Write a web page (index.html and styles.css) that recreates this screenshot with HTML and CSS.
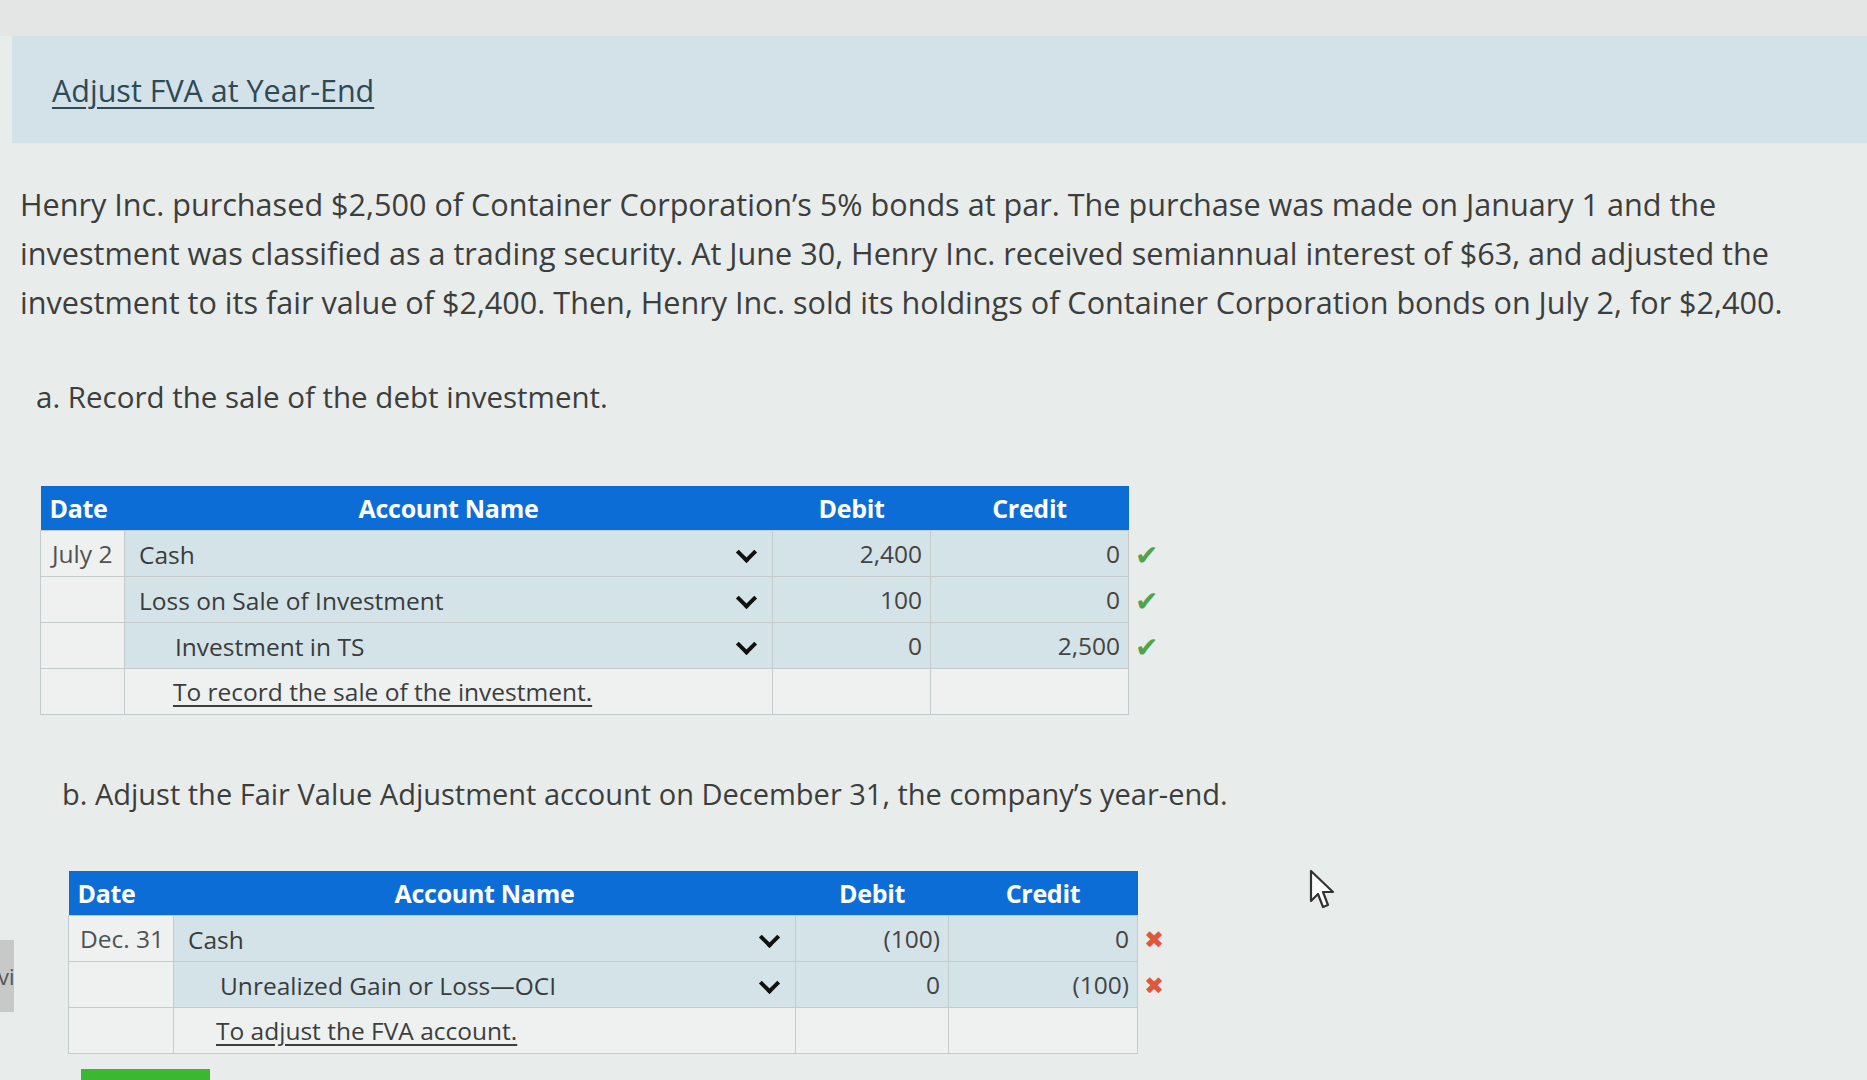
FILE: index.html
```html
<!DOCTYPE html>
<html lang="en">

<head>
    <meta charset="UTF-8">
    <meta name="viewport" content="width=device-width, initial-scale=1.0">
    <title>Adjust FVA at Year-End</title>
    <link rel="stylesheet" href="styles.css">
</head>

<body>
    <div class="top-strip"></div>

    <div class="title-band">
        <a href="#" class="title-link">Adjust FVA at Year-End</a>
    </div>

    <div class="side-tab">vi</div>

    <main class="content">
        <p class="prompt">
            Henry Inc. purchased $2,500 of Container Corporation’s 5% bonds at par. The purchase was made on January 1 and the<br>
            investment was classified as a trading security. At June 30, Henry Inc. received semiannual interest of $63, and adjusted the<br>
            investment to its fair value of $2,400. Then, Henry Inc. sold its holdings of Container Corporation bonds on July 2, for $2,400.
        </p>

        <p class="part part-a">a. Record the sale of the debt investment.</p>

        <!-- Asiento a -->
        <table class="journal journal-a">
            <colgroup>
                <col class="c-date">
                <col class="c-account">
                <col class="c-debit">
                <col class="c-credit">
                <col class="c-mark">
            </colgroup>
            <thead>
                <tr>
                    <th class="th-date">Date</th>
                    <th>Account Name</th>
                    <th>Debit</th>
                    <th>Credit</th>
                    <th class="mark"></th>
                </tr>
            </thead>
            <tbody>
                <tr>
                    <td class="date">July 2</td>
                    <td class="account"><span>Cash</span><i class="chev"></i></td>
                    <td class="num">2,400</td>
                    <td class="num">0</td>
                    <td class="mark"><span class="ok">✔</span></td>
                </tr>
                <tr>
                    <td class="date"></td>
                    <td class="account"><span>Loss on Sale of Investment</span><i class="chev"></i></td>
                    <td class="num">100</td>
                    <td class="num">0</td>
                    <td class="mark"><span class="ok">✔</span></td>
                </tr>
                <tr>
                    <td class="date"></td>
                    <td class="account credit-line"><span>Investment in TS</span><i class="chev"></i></td>
                    <td class="num">0</td>
                    <td class="num">2,500</td>
                    <td class="mark"><span class="ok">✔</span></td>
                </tr>
                <tr class="memo-row">
                    <td class="date"></td>
                    <td class="memo"><a href="#">To record the sale of the investment.</a></td>
                    <td></td>
                    <td></td>
                    <td class="mark"></td>
                </tr>
            </tbody>
        </table>

        <p class="part part-b">b. Adjust the Fair Value Adjustment account on December 31, the company’s year-end.</p>

        <!-- Asiento b -->
        <table class="journal journal-b">
            <colgroup>
                <col class="c-date">
                <col class="c-account">
                <col class="c-debit">
                <col class="c-credit">
                <col class="c-mark">
            </colgroup>
            <thead>
                <tr>
                    <th class="th-date">Date</th>
                    <th>Account Name</th>
                    <th>Debit</th>
                    <th>Credit</th>
                    <th class="mark"></th>
                </tr>
            </thead>
            <tbody>
                <tr>
                    <td class="date">Dec. 31</td>
                    <td class="account"><span>Cash</span><i class="chev"></i></td>
                    <td class="num">(100)</td>
                    <td class="num">0</td>
                    <td class="mark"><span class="bad">✖</span></td>
                </tr>
                <tr>
                    <td class="date"></td>
                    <td class="account credit-line"><span>Unrealized Gain or Loss—OCI</span><i class="chev"></i></td>
                    <td class="num">0</td>
                    <td class="num">(100)</td>
                    <td class="mark"><span class="bad">✖</span></td>
                </tr>
                <tr class="memo-row">
                    <td class="date"></td>
                    <td class="memo"><a href="#">To adjust the FVA account.</a></td>
                    <td></td>
                    <td></td>
                    <td class="mark"></td>
                </tr>
            </tbody>
        </table>

        <div class="next-btn"></div>
    </main>

    <!-- Puntero del ratón -->
    <svg class="cursor" width="30" height="46" viewBox="0 0 30 46">
        <path d="M3 3 L3 33 L10 26 L15 39 L20 37 L15 24 L25 24 Z" fill="#fff" stroke="#333" stroke-width="2.2" stroke-linejoin="round"/>
    </svg>
</body>

</html>
```

FILE: styles.css
```css
/* Estilos generales */
body {
    margin: 0;
    padding: 0;
    font-family: 'Open Sans', 'Noto Sans', sans-serif;
    background: #e8ecea;
    color: #3a3c3c;
    position: relative;
    min-height: 1080px;
    overflow: hidden;
}

.top-strip {
    height: 36px;
    background: #e3e6e4;
}

.title-band {
    margin-left: 12px;
    height: 107px;
    background: #d2e2e8;
    display: flex;
    align-items: center;
    padding-left: 40px;
}

.title-link {
    color: #2d4a55;
    font-size: 30.5px;
    text-decoration: underline;
    text-underline-offset: 5px;
    text-decoration-thickness: 2px;
}

.side-tab {
    position: absolute;
    left: 0;
    top: 940px;
    width: 14px;
    height: 72px;
    background: #c6c9c8;
    color: #555;
    font-size: 22px;
    line-height: 72px;
    overflow: hidden;
    text-indent: -2px;
}

.content {
    padding-left: 20px;
}

.prompt {
    margin: 37px 0 0;
    font-size: 30.6px;
    line-height: 49px;
    color: #3c3e3e;
}

.part {
    margin: 0;
    font-size: 29.5px;
    line-height: 40px;
    color: #3c3e3e;
}

.part-a {
    margin-top: 50px;
    padding-left: 16px;
}

.part-b {
    margin-top: 59px;
    padding-left: 42px;
    font-size: 29px;
}

/* Tablas de asientos */
.journal {
    border-collapse: collapse;
    table-layout: fixed;
    font-size: 24.5px;
}

.journal-a {
    margin-top: 69px;
    margin-left: 20px;
    width: 1148px;
}

.journal-a .c-date { width: 84px; }
.journal-a .c-account { width: 648px; }
.journal-a .c-debit { width: 158px; }
.journal-a .c-credit { width: 198px; }
.journal-a .c-mark { width: 60px; }

.journal-b {
    margin-top: 57px;
    margin-left: 48px;
    width: 1129px;
}

.journal-b .c-date { width: 105px; }
.journal-b .c-account { width: 622px; }
.journal-b .c-debit { width: 153px; }
.journal-b .c-credit { width: 189px; }
.journal-b .c-mark { width: 60px; }

.journal th {
    background: #0d6dd7;
    color: #fff;
    font-weight: 700;
    font-size: 25px;
    letter-spacing: -0.3px;
    height: 44px;
    padding: 0;
    text-align: center;
}

.journal th.th-date {
    text-align: left;
    padding-left: 9px;
}

.journal th.mark,
.journal td.mark {
    background: transparent;
    border: none;
    text-align: left;
    padding-left: 6px;
}

.journal td {
    height: 45px;
    padding: 0;
    border: 1px solid #c3cbcc;
    background: #d4e3e8;
    white-space: nowrap;
}

.journal td.date {
    background: #eef1f0;
    padding-left: 11px;
    color: #505252;
}

.journal td.account {
    padding-left: 14px;
    padding-right: 10px;
}

.journal td.account span {
    display: inline-block;
    vertical-align: middle;
}

.journal td.credit-line {
    padding-left: 50px;
}

.journal-b td.credit-line {
    padding-left: 46px;
}

.chev {
    float: right;
    width: 11px;
    height: 11px;
    margin: 9px 8px 0 0;
    border-right: 4px solid #111;
    border-bottom: 4px solid #111;
    transform: rotate(45deg);
}

.journal td.num {
    text-align: right;
    padding-right: 8px;
    color: #444;
}

.memo-row td {
    background: #eef1f0;
}

.journal td.memo {
    padding-left: 48px;
}

.journal-b td.memo {
    padding-left: 42px;
}

.memo a {
    color: #3c3e3e;
    text-decoration: underline;
    text-underline-offset: 4px;
}

.ok {
    color: #4fa64a;
    font-size: 28px;
}

.bad {
    color: #e0583a;
    font-size: 24px;
}

.next-btn {
    margin-top: 15px;
    margin-left: 61px;
    width: 129px;
    height: 20px;
    background: #3cb731;
}

.cursor {
    position: absolute;
    left: 1308px;
    top: 868px;
}
```
